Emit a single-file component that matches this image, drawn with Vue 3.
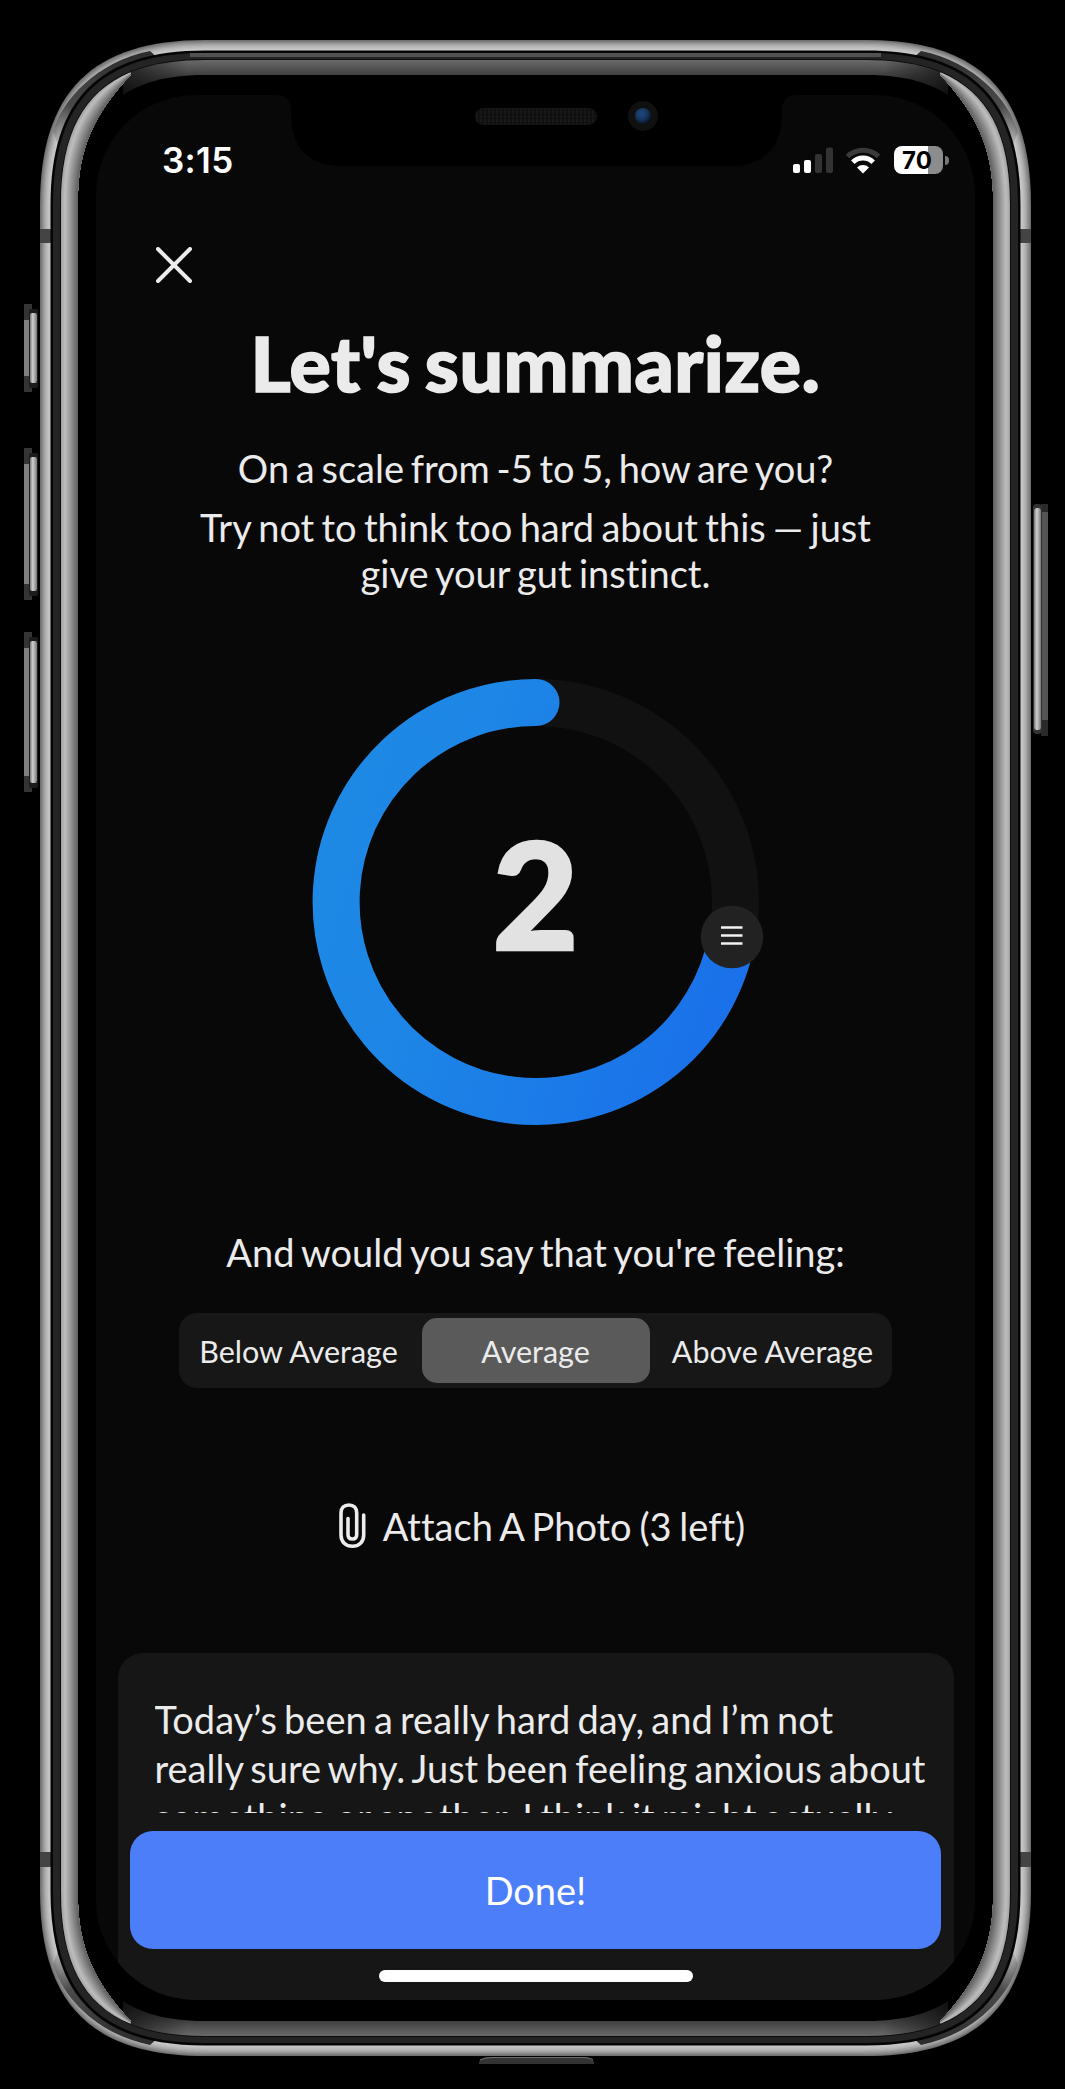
<script setup>
import { ref } from 'vue'

const LEFT = 40
const RIGHT = 1031
const TOP = 40
const BOTTOM = 2056

// Continuous-curvature rounded outline of the body, shrunk by dx / dy.
function outline(dx, dy = dx) {
  const l = LEFT + dx
  const r = RIGHT - dx
  const t = TOP + dy
  const b = BOTTOM - dy
  const rx = 165 - dx
  const ry = 165 - dy
  const kx = rx * 0.315
  const ky = ry * 0.315
  return (
    `M${l + rx} ${t}H${r - rx}C${r - kx} ${t} ${r} ${t + ky} ${r} ${t + ry}` +
    `V${b - ry}C${r} ${b - ky} ${r - kx} ${b} ${r - rx} ${b}` +
    `H${l + rx}C${l + kx} ${b} ${l} ${b - ky} ${l} ${b - ry}` +
    `V${t + ry}C${l} ${t + ky} ${l + kx} ${t} ${l + rx} ${t}Z`
  )
}

const grey = (v) => `rgb(${Math.round(v)},${Math.round(v)},${Math.round(v)})`

const rim = Array.from({ length: 11 }, (_, i) => ({
  d: outline(i),
  fill: grey(112 + 88 * Math.sin((i / 10) * 1.5)),
}))

const lip = Array.from({ length: 15 }, (_, i) => ({
  d: outline(21 + i * 1.1, 20 + i),
  fill: grey(104 - i * 2.8),
}))

// Bright side reflections, tapering to a point in each corner.
const edgeOut = [61, 204, 61, 134.7, 83, 91.9, 130.2, 72.4]
const edgeIn = [78, 192, 80, 137, 103, 105, 131, 74.5]
const mix = (k) => edgeOut.map((v, i) => v + (edgeIn[i] - v) * k)
const M = BOTTOM + TOP

function sideShape(k) {
  const a = mix(k)
  const b = edgeIn
  return (
    `M${a[6]} ${a[7]}C${a[4]} ${a[5]} ${a[2]} ${a[3]} ${a[0]} ${a[1]}` +
    `V${M - a[1]}C${a[2]} ${M - a[3]} ${a[4]} ${M - a[5]} ${a[6]} ${M - a[7]}` +
    `L${b[6]} ${M - b[7]}C${b[4]} ${M - b[5]} ${b[2]} ${M - b[3]} ${b[0]} ${M - b[1]}` +
    `V${b[1]}C${b[2]} ${b[3]} ${b[4]} ${b[5]} ${b[6]} ${b[7]}Z`
  )
}

const sides = Array.from({ length: 17 }, (_, i) => {
  const k = i / 17
  return { d: sideShape(k), fill: grey(k < 0.2 ? 165 + k * 130 : 191 - (k - 0.2) * 125) }
})

const leftButtons = [
  { y: 304, h: 88 },
  { y: 448, h: 152 },
  { y: 632, h: 160 },
]

const options = ['Below Average', 'Average', 'Above Average']
const selected = ref('Average')
const score = ref(2)
</script>

<template>
  <div class="stage">
    <svg class="frame" width="1065" height="2089" viewBox="0 0 1065 2089" aria-hidden="true">
      <defs>
        <linearGradient id="btn" x1="0" x2="1" y1="0" y2="0">
          <stop offset="0" stop-color="#777" />
          <stop offset=".4" stop-color="#d0d0d0" />
          <stop offset="1" stop-color="#777" />
        </linearGradient>
        <linearGradient id="cornerDark" x1="0" x2="1" y1="1" y2="0">
          <stop offset="0" stop-color="#555" stop-opacity="0" />
          <stop offset=".3" stop-color="#4a4a4a" />
          <stop offset=".7" stop-color="#333" />
          <stop offset="1" stop-color="#2a2a2a" />
        </linearGradient>
        <linearGradient id="lipFade" x1="0" x2="1" y1="0" y2="0">
          <stop offset="0" stop-color="#000" stop-opacity=".75" />
          <stop offset="1" stop-color="#000" stop-opacity="0" />
        </linearGradient>
        <radialGradient id="lens" cx=".4" cy=".35" r=".65">
          <stop offset="0" stop-color="#1d4a80" />
          <stop offset=".55" stop-color="#16375f" />
          <stop offset="1" stop-color="#0a1428" />
        </radialGradient>
        <pattern id="mesh" width="4" height="4" patternUnits="userSpaceOnUse">
          <rect width="4" height="4" fill="#101010" />
          <rect width="2" height="3" fill="#191919" />
        </pattern>
        <clipPath id="lipClip"><path :d="outline(21, 20)" /></clipPath>
        <path
          id="corner"
          d="M53 132C62 100 96 62 150 51L160 60L100 110L60 150Z"
          fill="url(#cornerDark)"
        />
        <g id="lipEnd">
          <rect x="61" y="60" width="62" height="200" fill="#000" />
          <rect x="123" y="60" width="65" height="40" fill="url(#lipFade)" />
        </g>
        <g id="sideSet">
          <path v-for="(s, i) in sides" :key="i" :d="s.d" :fill="s.fill" />
        </g>
      </defs>

      <g v-for="(b, i) in leftButtons" :key="i">
        <rect x="24" :y="b.y" width="8" :height="b.h" fill="#343434" />
        <rect x="24" :y="b.y + 16" width="6" :height="b.h - 32" fill="#808080" />
        <rect x="29" :y="b.y + 5" width="9" :height="b.h - 9" rx="2" fill="#1c1c1c" />
        <rect x="30" :y="b.y + 9" width="7" :height="b.h - 18" rx="2" fill="url(#btn)" />
      </g>
      <rect x="1041" y="504" width="7" height="232" fill="#2a2a2a" />
      <rect x="1042" y="512" width="6" height="208" fill="#555" />
      <rect x="1033" y="504" width="9" height="230" rx="4" fill="#333" />
      <rect x="1034" y="508" width="7" height="222" rx="3" fill="url(#btn)" />
      <path d="M479 2062Q481 2057 492 2057H582Q592 2057 594 2062V2064H479Z" fill="#333" />
      <path d="M480 2060Q484 2057.500 492 2057.500H582Q590 2057.500 593 2060" fill="none" stroke="#707070" />

      <path v-for="(r, i) in rim" :key="'r' + i" :d="r.d" :fill="r.fill" />
      <g fill="#444">
        <rect x="40" y="229" width="11" height="14" />
        <rect x="1020" y="229" width="11" height="14" />
        <rect x="40" y="1852" width="11" height="15" />
        <rect x="1020" y="1852" width="11" height="15" />
      </g>
      <use href="#corner" />
      <use href="#corner" transform="matrix(-1 0 0 1 1071 0)" />
      <use href="#corner" transform="matrix(1 0 0 -1 0 2096)" />
      <use href="#corner" transform="matrix(-1 0 0 -1 1071 2096)" />
      <path :d="outline(10.5)" fill="#050505" />
      <path :d="outline(13)" fill="#242424" />
      <path d="M190 55H881" stroke="#525252" stroke-width="4" />
      <path :d="outline(20, 19)" fill="#0c0c0c" />
      <path v-for="(l, i) in lip" :key="'l' + i" :d="l.d" :fill="l.fill" />
      <path :d="outline(38, 35)" fill="#000" />
      <g clip-path="url(#lipClip)">
        <rect x="61" y="240" width="30" height="1616" fill="#000" />
        <rect x="980" y="240" width="30" height="1616" fill="#000" />
        <use href="#lipEnd" />
        <use href="#lipEnd" transform="matrix(-1 0 0 1 1071 0)" />
        <use href="#lipEnd" transform="matrix(1 0 0 -1 0 2096)" />
        <use href="#lipEnd" transform="matrix(-1 0 0 -1 1071 2096)" />
      </g>
      <use href="#sideSet" />
      <use href="#sideSet" transform="matrix(-1 0 0 1 1071 0)" />
    </svg>

    <main class="screen">
      <svg class="notch" width="520" height="90" viewBox="0 0 520 90" aria-hidden="true">
        <path d="M0 0H520Q506 0 506 16V20C506 52 488 71 455 71H66C33 71 15 52 15 20V16Q15 0 0 0Z" />
        <rect x="199" y="13" width="122" height="17" rx="8.500" fill="url(#mesh)" />
        <circle cx="367" cy="21" r="15" fill="#101010" />
        <circle cx="367" cy="21" r="8" fill="url(#lens)" />
      </svg>

      <header class="status">
        <span class="time">3:15</span>
        <div class="indicators">
          <svg width="41" height="28" viewBox="0 0 41 28" aria-label="Signal">
            <rect x="0" y="17" width="7" height="9" rx="2" fill="#fff" />
            <rect x="11" y="13" width="7" height="13" rx="2" fill="#fff" />
            <rect x="22" y="7" width="7" height="19" rx="2" fill="#333" />
            <rect x="33" y="0.500" width="7" height="25.500" rx="2" fill="#333" />
          </svg>
          <svg class="wifi" width="36" height="28" viewBox="0 0 36 28" aria-label="Wi-Fi">
            <path d="M2.500 9.500A22.500 22.500 0 0 1 33.500 9.500" fill="none" stroke="#3a3a3a" stroke-width="5" />
            <path d="M7.800 15.200A14.500 14.500 0 0 1 28.200 15.200" fill="none" stroke="#fff" stroke-width="5" />
            <path d="M12 20.500A8.500 8.500 0 0 1 24 20.500L18 26.500Z" fill="#fff" />
          </svg>
          <div class="battery"><span>70</span></div>
          <i class="cap"></i>
        </div>
      </header>

      <button class="close" aria-label="Close">
        <svg width="36" height="36" viewBox="0 0 36 36">
          <path d="M2 2L34 34M34 2L2 34" stroke="#ececec" stroke-width="4" stroke-linecap="round" />
        </svg>
      </button>

      <h1>Let's summarize.</h1>
      <p class="lead">On a scale from -5 to 5, how are you?</p>
      <p class="hint">Try not to think too hard about this — just<br />give your gut instinct.</p>

      <div class="dial">
        <svg width="460" height="460" viewBox="-230 -230 460 460">
          <defs>
            <linearGradient id="arc" gradientUnits="userSpaceOnUse" x1="-200" y1="-60" x2="215" y2="70">
              <stop offset="0" stop-color="#1e88e5" />
              <stop offset=".25" stop-color="#1d86e6" />
              <stop offset="1" stop-color="#1a70ea" />
            </linearGradient>
          </defs>
          <circle r="199.500" fill="none" stroke="#111" stroke-width="47" />
          <path
            d="M0 -199.500A199.500 199.500 0 1 0 196 35"
            fill="none"
            stroke="url(#arc)"
            stroke-width="47"
            stroke-linecap="round"
          />
          <circle cx="196" cy="35" r="31.300" fill="#222" />
          <path d="M185 25.500H206.500M185 33.500H206.500M185 41.500H206.500" stroke="#f2f2f2" stroke-width="2.700" />
        </svg>
        <strong>{{ score }}</strong>
      </div>

      <p class="question">And would you say that you're feeling:</p>
      <div class="segments" role="radiogroup">
        <button
          v-for="o in options"
          :key="o"
          :class="{ active: o === selected }"
          @click="selected = o"
        >{{ o }}</button>
      </div>

      <button class="attach">
        <svg width="28" height="46" viewBox="0 0 28 46">
          <path
            d="M24.700 12V32C24.700 39 20 43.300 13.400 43.300S2 39 2 32V10C2 5 5 2 9.900 2S17.700 5 17.700 10V31.500C17.700 34.500 16 36 13.400 36S9 34.500 9 31.500V15.500"
            fill="none"
            stroke="#ececec"
            stroke-width="3.600"
            stroke-linecap="round"
          />
        </svg>
        <span>Attach A Photo (3 left)</span>
      </button>

      <section class="note">
        <p>Today’s been a really hard day, and I’m not<br />really sure why. Just been feeling anxious about<br />something or another. I think it might actually</p>
        <button class="done">Done!</button>
        <i class="home"></i>
      </section>
    </main>
  </div>
</template>

<style>
body {
  margin: 0;
  background: #000;
}
</style>

<style scoped>
.stage {
  position: relative;
  box-sizing: border-box;
  width: 1065px;
  height: 2089px;
  padding: 95px 0 0 96px;
  overflow: hidden;
  background: #000;
  color: #ebebeb;
  font-family: Lato, "Open Sans", sans-serif;
  font-variant-ligatures: none;
}
.frame {
  position: absolute;
  inset: 0;
}
.screen {
  position: relative;
  display: flex;
  flex-direction: column;
  align-items: center;
  width: 879px;
  height: 1905px;
  overflow: hidden;
  border-radius: 100px;
  background: #080808;
}
.notch {
  position: absolute;
  top: 0;
  left: 180px;
}
button {
  padding: 0;
  border: 0;
  background: none;
  color: inherit;
  font: inherit;
}
p,
h1 {
  margin: 0;
  white-space: nowrap;
}
.status {
  position: relative;
  box-sizing: border-box;
  display: flex;
  justify-content: space-between;
  align-items: flex-start;
  width: 100%;
  height: 80px;
  flex: none;
  padding: 43px 26px 0 66px;
}
.time {
  color: #fff;
  font: 600 35px/44px Inter, sans-serif;
  letter-spacing: 0.3px;
}
.indicators {
  display: flex;
  align-items: flex-start;
  padding-top: 9px;
}
.indicators svg {
  flex: none;
}
.wifi {
  margin-left: 11px;
}
.battery {
  width: 49px;
  height: 28px;
  margin: -1px 0 0 13px;
  border-radius: 8px;
  background: linear-gradient(90deg, #fff 70%, #8c8c8c 70%);
  color: #000;
  font: 700 24px/29px Inter, sans-serif;
  text-align: center;
}
.battery span {
  display: block;
  padding-right: 3px;
}
.cap {
  width: 4px;
  height: 9px;
  margin: 9px 0 0 2px;
  border-radius: 0 4px 4px 0;
  background: #777;
}
.close {
  height: 36px;
  margin: 72px 0 0 60px;
  align-self: flex-start;
}
.close svg,
.attach svg {
  display: block;
}
h1 {
  margin-top: 34px;
  font-size: 77px;
  font-weight: 900;
  line-height: 90px;
  letter-spacing: 0.5px;
  word-spacing: -5px;
  -webkit-text-stroke: 1.6px #ebebeb;
}
.lead,
.hint,
.question,
.attach {
  font-size: 38px;
  line-height: 46.500px;
  word-spacing: -2.400px;
}
.lead {
  margin-top: 38px;
  word-spacing: -3px;
}
.hint {
  margin-top: 12px;
  text-align: center;
}
.dial {
  display: grid;
  place-items: center;
  margin-top: 75.500px;
}
.dial > * {
  grid-area: 1 / 1;
}
.dial strong {
  padding-bottom: 18px;
  color: #e2e2e2;
  font-size: 149px;
  font-weight: 900;
  line-height: 180px;
  -webkit-text-stroke: 2.500px #e2e2e2;
}
.question {
  margin-top: 96.500px;
}
.segments {
  box-sizing: border-box;
  display: grid;
  grid-template-columns: repeat(3, 237px);
  width: 713px;
  height: 75px;
  flex: none;
  margin-top: 38px;
  padding: 5px 1px;
  border-radius: 18px;
  background: #171717;
  font-size: 30.500px;
  word-spacing: -1px;
}
.segments .active {
  margin: 0 4.500px;
  border-radius: 15px;
  background: #5a5a5a;
}
.attach {
  display: flex;
  align-items: center;
  gap: 16px;
  margin: 115px 0 0 13px;
  word-spacing: -2px;
}
.note {
  box-sizing: border-box;
  display: flex;
  flex-direction: column;
  align-items: center;
  width: 836px;
  height: 347px;
  flex: none;
  margin-top: auto;
  padding-top: 42px;
  border-radius: 25px 25px 0 0;
  background: #161616;
}
.note p {
  align-self: flex-start;
  height: 118px;
  margin-left: 37px;
  overflow: hidden;
  font-size: 38px;
  line-height: 49px;
  word-spacing: -2.500px;
}
.done {
  width: 811px;
  height: 118px;
  margin-top: 18px;
  border-radius: 23px;
  background: #4d7efa;
  color: #fff;
  font-size: 38px;
}
.home {
  width: 314px;
  height: 12px;
  margin-top: 21px;
  border-radius: 6px;
  background: #fff;
}
</style>
